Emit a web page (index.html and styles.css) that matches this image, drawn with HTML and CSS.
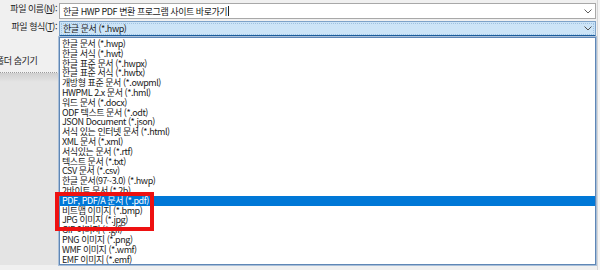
FILE: index.html
```html
<!DOCTYPE html>
<html lang="ko">
<head>
<meta charset="utf-8">
<link rel="stylesheet" href="styles.css">
</head>
<body>
<div class="dialog">
  <div class="form">
    <div class="lbl lbl1">파일 이름(<u>N</u>):</div>
    <div class="field input">
      <span class="val">한글 HWP PDF 변환 프로그램 사이트 바로가기</span><span class="caret"></span>
      <svg class="chev" width="8" height="5" viewBox="0 0 8 5"><path d="M0.5 0.5 L4 4 L7.5 0.5" fill="none" stroke="#606060" stroke-width="1"/></svg>
    </div>
    <div class="lbl lbl2">파일 형식(<u>T</u>):</div>
    <div class="field select">
      <span class="val">한글 문서 (*.hwp)</span>
      <svg class="chev" width="8" height="5" viewBox="0 0 8 5"><path d="M0.5 0.5 L4 4 L7.5 0.5" fill="none" stroke="#505050" stroke-width="1"/></svg>
    </div>
    <div class="side">
      <div class="hide">폴더 숨기기</div>
      <div class="shade"></div>
    </div>
    <ul class="list">
      <li>한글 문서 (*.hwp)</li>
      <li>한글 서식 (*.hwt)</li>
      <li>한글 표준 문서 (*.hwpx)</li>
      <li>한글 표준 서식 (*.hwtx)</li>
      <li>개방형 표준 문서 (*.owpml)</li>
      <li>HWPML 2.x 문서 (*.hml)</li>
      <li>워드 문서 (*.docx)</li>
      <li>ODF 텍스트 문서 (*.odt)</li>
      <li>JSON Document (*.json)</li>
      <li>서식 있는 인터넷 문서 (*.html)</li>
      <li>XML 문서 (*.xml)</li>
      <li>서식있는 문서 (*.rtf)</li>
      <li>텍스트 문서 (*.txt)</li>
      <li>CSV 문서 (*.csv)</li>
      <li>한글 문서(97~3.0) (*.hwp)</li>
      <li>2바이트 문서 (*.2b)</li>
      <li class="sel">PDF, PDF/A 문서 (*.pdf)</li>
      <li>비트맵 이미지 (*.bmp)</li>
      <li>JPG 이미지 (*.jpg)</li>
      <li>GIF 이미지 (*.gif)</li>
      <li>PNG 이미지 (*.png)</li>
      <li>WMF 이미지 (*.wmf)</li>
      <li>EMF 이미지 (*.emf)</li>
    </ul>
  </div>
  <div class="gutter"></div>
  <div class="mark"></div>
</div>
</body>
</html>
```

FILE: styles.css
```css
* { box-sizing: border-box; }
html, body {
  margin: 0;
  padding: 0;
  width: 600px;
  height: 270px;
  overflow: hidden;
  background: #f0f0f0;
}
body {
  font-family: "Noto Sans CJK KR", "Noto Sans", sans-serif;
  font-size: 9px;
  letter-spacing: -0.45px;
  color: #1a1a1a;
}
.dialog {
  position: relative;
  display: flex;
  width: 600px;
  height: 270px;
}
.form {
  display: grid;
  grid-template-columns: 59px 537px;
  grid-template-rows: 18px 16px 228px;
  padding-top: 3px;
}
.lbl {
  text-align: right;
  padding-right: 2px;
  white-space: nowrap;
  color: #222;
}
.lbl u { text-decoration: underline; text-underline-offset: 1px; }
.lbl1 { line-height: 18px; margin-top: -3px; }
.lbl2 { line-height: 12px; }
.field {
  display: flex;
  align-items: center;
  padding-left: 3px;
  padding-right: 3px;
  white-space: nowrap;
}
.field .val { flex: none; }
.field .chev { margin-left: auto; flex: none; }
.input {
  height: 16px;
  background: #fff;
  border: 1px solid #a8a8a8;
}
.caret {
  display: inline-block;
  width: 1px;
  height: 10px;
  background: #222;
  margin-left: 1px;
}
.select {
  height: 16px;
  background: #cce4f7;
  border: 1px solid #7da2c8;
  border-bottom: 2px solid #1c5d9c;
  outline: 1px dotted #9fc2e2;
  outline-offset: -3px;
}
.side {
  display: flex;
  flex-direction: column;
}
.hide {
  height: 36px;
  padding-top: 18px;
  line-height: 12px;
  margin-left: -4px;
  white-space: nowrap;
  color: #222;
  border-bottom: 1px dotted #9a9a9a;
}
.shade {
  flex: 1;
  background: linear-gradient(#cfcfcf, #e4e4e4 9px, #e4e4e4);
}
.list {
  list-style: none;
  margin: 0;
  padding: 1px 0 0;
  background: #fff;
  border: 1px solid #5f87b6;
  box-shadow: 0 0 0 1px #a9bfd9;
  height: 228px;
}
.list li {
  height: 9.8px;
  line-height: 9.8px;
  padding-left: 2px;
  white-space: nowrap;
  color: #1a1a1a;
}
.list li.sel {
  background: #0078d7;
  color: #fff;
}
.gutter {
  flex: 1;
  border-left: 1px solid #d6d6d6;
  margin-left: 1px;
  background: #f4f4f4;
}
.mark {
  position: absolute;
  left: 55px;
  top: 192px;
  width: 99px;
  height: 39px;
  border: 4px solid #ee1111;
}
```
